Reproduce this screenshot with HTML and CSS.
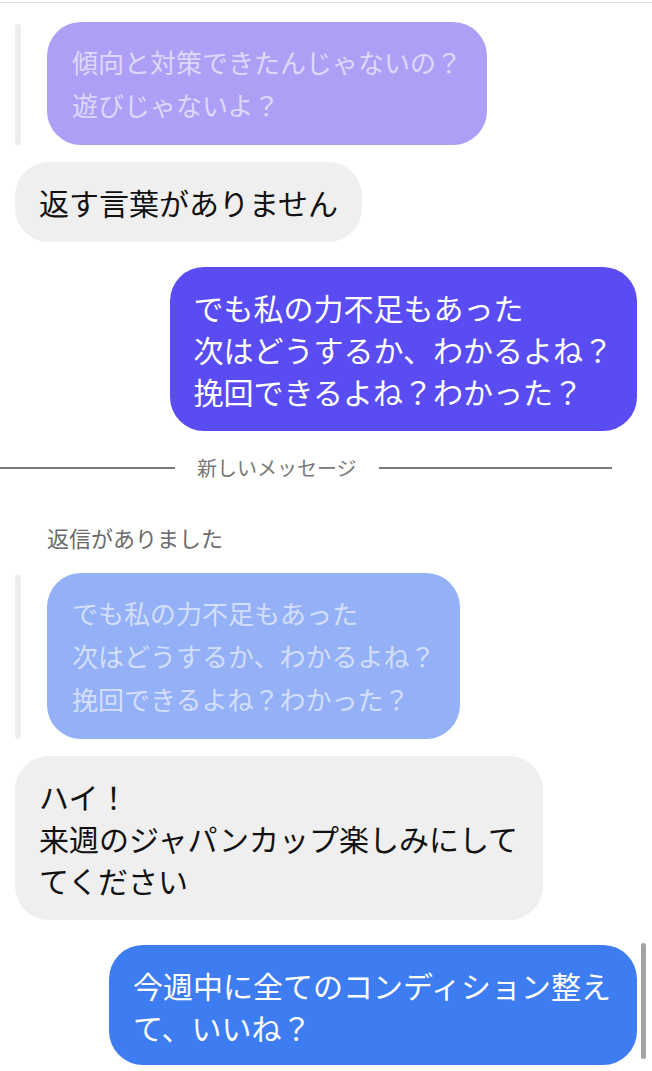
FILE: index.html
```html
<!DOCTYPE html>
<html lang="ja">
<head>
  <meta charset="UTF-8">
  <title>メッセージ</title>
  <meta name="viewport" content="width=device-width, initial-scale=1.0">
  <link rel="stylesheet" href="styles.css">
</head>
<body>
  <div class="top-rule"></div>
  <main class="thread">
    <div class="quote-row">
      <span class="quote-bar"></span>
      <p class="bubble quoted quoted-purple">傾向と対策できたんじゃないの？<br>遊びじゃないよ？</p>
    </div>
    <p class="bubble received first-after-quote">返す言葉がありません</p>

    <p class="bubble sent sent-indigo">でも私の力不足もあった<br>次はどうするか、わかるよね？<br>挽回できるよね？わかった？</p>

    <div class="divider"><span>新しいメッセージ</span></div>

    <p class="reply-note">返信がありました</p>
    <div class="quote-row quote-row-second">
      <span class="quote-bar"></span>
      <p class="bubble quoted quoted-blue">でも私の力不足もあった<br>次はどうするか、わかるよね？<br>挽回できるよね？わかった？</p>
    </div>
    <p class="bubble received first-after-quote">ハイ！<br>来週のジャパンカップ楽しみにしててください</p>

    <p class="bubble sent sent-blue">今週中に全てのコンディション整えて、いいね？</p>
  </main>
  <div class="scrollbar"></div>
</body>
</html>
```

FILE: styles.css
```css
*,
*::before,
*::after {
  box-sizing: border-box;
}
body {
  margin: 0;
  padding-top: 2px;
  font-family: "Noto Sans CJK JP", "Noto Sans", sans-serif;
  background: #fff;
  color: #111;
}
.top-rule {
  height: 1px;
  background: #dedede;
}
.thread {
  display: flex;
  flex-direction: column;
  padding: 0 15px;
}
p {
  margin: 0;
}
.bubble {
  max-width: 528px;
  padding: 19px 24px;
  border-radius: 34px;
  font-size: 30px;
  line-height: 42px;
}
.received {
  align-self: flex-start;
  background: #efefef;
  color: #111;
}
.sent {
  align-self: flex-end;
  margin-top: 25px;
  color: #fff;
}
.sent-indigo {
  background: #5a4cf3;
}
.sent-blue {
  padding-bottom: 17px;
  background: #3d7cf1;
}
.first-after-quote {
  margin-top: 17px;
}

/* quoted reply */
.quote-row {
  display: flex;
  align-items: stretch;
  gap: 26px;
  margin-top: 19px;
}
.quote-row-second {
  margin-top: 21px;
}
.quote-bar {
  width: 6px;
  margin-top: 2px;
  border-radius: 3px;
  background: #ededed;
}
.quoted {
  padding: 18px 25px 19px;
  font-size: 26px;
  line-height: 43px;
  color: rgba(255, 255, 255, 0.62);
}
.quoted-purple {
  background: #ad9ff6;
}
.quoted-blue {
  background: #94b0f7;
}

/* new messages divider */
.divider {
  display: flex;
  align-items: center;
  gap: 22px;
  margin: 23px 25px 0 -15px;
  font-size: 20px;
  line-height: 28px;
  color: #777;
}
.divider::before,
.divider::after {
  content: "";
  height: 2px;
  background: #7a7a7a;
}
.divider::before {
  width: 175px;
}
.divider::after {
  flex: 1;
}
.reply-note {
  margin: 40px 0 0 32px;
  font-size: 22px;
  line-height: 30px;
  color: #6b6b6b;
}
.scrollbar {
  position: fixed;
  top: 943px;
  right: 6px;
  width: 5px;
  height: 116px;
  border-radius: 3px;
  background: #a3a3a3;
}
```
